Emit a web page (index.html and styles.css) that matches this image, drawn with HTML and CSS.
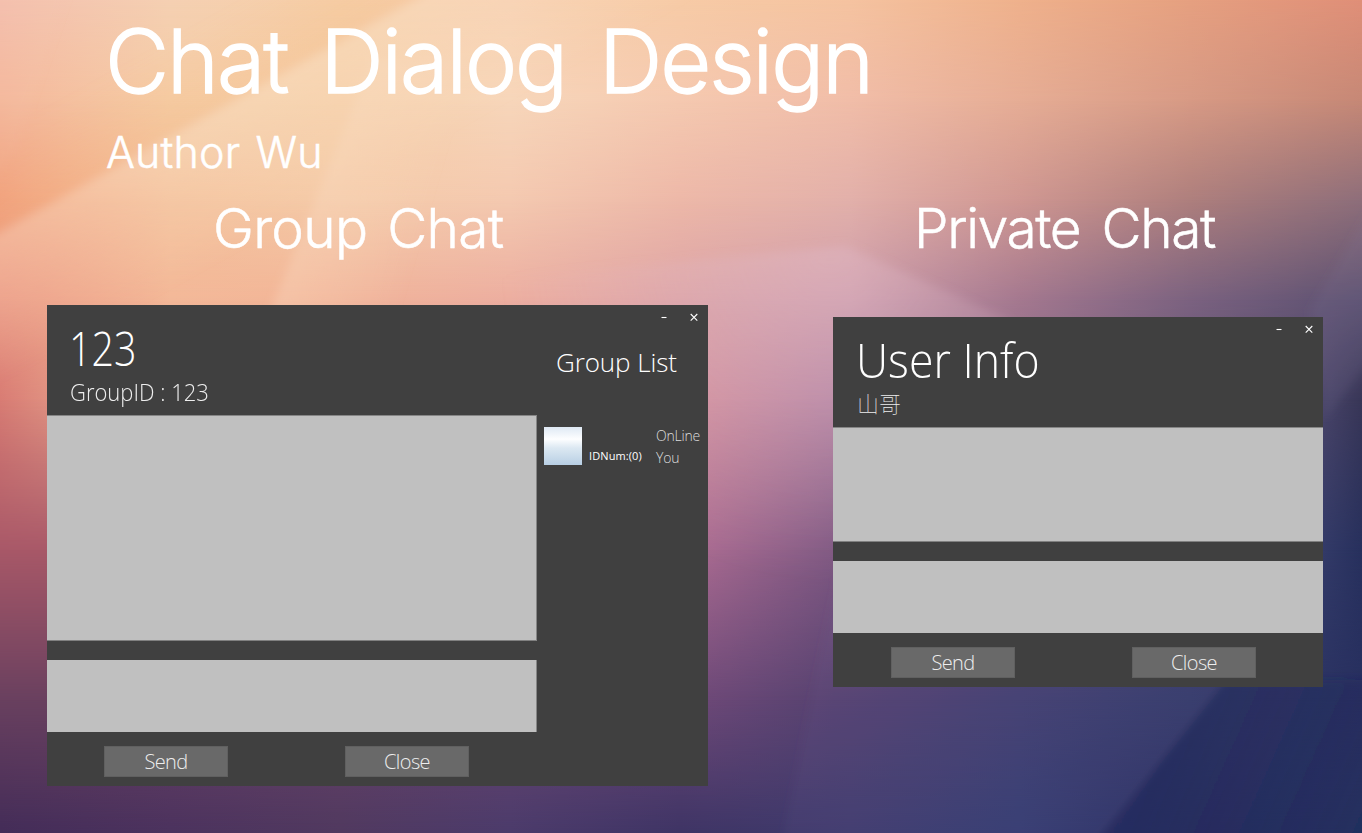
FILE: index.html
```html
<!DOCTYPE html>
<html lang="en">
<head>
<meta charset="utf-8">
<title>Chat Dialog Design</title>
<link rel="stylesheet" href="styles.css">
</head>
<body>
<div class="backdrop" aria-hidden="true">
  <div class="band band-1"></div>
  <div class="band band-2"></div>
  <div class="band band-3"></div>
  <div class="band band-4"></div>
  <div class="band band-5"></div>
  <div class="band band-6"></div>
  <div class="band band-7"></div>
  <div class="band band-8"></div>
  <svg class="facets" width="1362" height="833" viewBox="0 0 1362 833">
    <defs>
      <filter id="soft" filterUnits="userSpaceOnUse" x="-60" y="-60" width="1482" height="953"><feGaussianBlur stdDeviation="5"/></filter>
      <linearGradient id="g1" gradientUnits="userSpaceOnUse" x1="200" y1="118" x2="265" y2="235"><stop offset="0" stop-color="#f9e2c8" stop-opacity=".38"/><stop offset="1" stop-color="#f9e2c8" stop-opacity="0"/></linearGradient>
      <linearGradient id="g1b" gradientUnits="userSpaceOnUse" x1="200" y1="118" x2="160" y2="46"><stop offset="0" stop-color="#f3b57c" stop-opacity=".22"/><stop offset="1" stop-color="#f3b57c" stop-opacity="0"/></linearGradient>
      <linearGradient id="g2" gradientUnits="userSpaceOnUse" x1="310" y1="170" x2="430" y2="205"><stop offset="0" stop-color="#fadfc8" stop-opacity=".32"/><stop offset="1" stop-color="#fadfc8" stop-opacity="0"/></linearGradient>
      <radialGradient id="g3" gradientUnits="userSpaceOnUse" cx="830" cy="250" r="330"><stop offset="0" stop-color="#e2bcca" stop-opacity=".38"/><stop offset=".35" stop-color="#e2bcca" stop-opacity=".25"/><stop offset="1" stop-color="#e6bcca" stop-opacity="0"/></radialGradient>
      <linearGradient id="g4" gradientUnits="userSpaceOnUse" x1="1160" y1="760" x2="1360" y2="850"><stop offset="0" stop-color="#22285a" stop-opacity=".6"/><stop offset="1" stop-color="#22285a" stop-opacity=".1"/></linearGradient>
    </defs>
    <g filter="url(#soft)">
      <path fill="url(#g1b)" d="M-40 255 460 -25-40 -25Z"/>
      <path fill="url(#g1)" d="M-40 255 460 -25 700 -25 500 400-40 400Z"/>
      <path fill="url(#g2)" d="M372 60 265 325 600 325 600 60Z"/>
      <path fill="url(#g3)" d="M380 290 845 246 1010 320 1010 600 380 600Z"/>
      <path fill="url(#g4)" d="M1225 680 1080 860 1400 860 1400 680Z"/>
      <path fill="#f7c9b6" fill-opacity=".08" d="M-40 -40H78L14 150-40 220Z"/>
      <path fill="#7a78a8" fill-opacity=".08" d="M840 560 778 860 1080 860 1225 680 1225 560Z"/>
      <path fill="#8b84a8" fill-opacity=".12" d="M1400 160 1310 310 1325 420 1400 320Z"/>
    </g>
  </svg>
</div>
<main class="page">
  <header class="intro">
    <h1 class="title">Chat Dialog Design</h1>
    <p class="author">Author Wu</p>
  </header>
  <div class="boards">
    <section class="board board-group">
      <h2 class="caption caption-group">Group Chat</h2>
      <div class="window window-group">
        <div class="conversation">
          <div class="head">
            <div class="name name-group">123</div>
            <div class="detail">GroupID : 123</div>
          </div>
          <div class="messages"></div>
          <div class="input"></div>
          <div class="actions"><button class="btn">Send</button><button class="btn">Close</button></div>
        </div>
        <aside class="members">
          <h3 class="members-title">Group List</h3>
          <div class="member">
            <span class="avatar"></span>
            <span class="member-id">IDNum:(0)</span>
            <span class="member-status"><span>OnLine</span><span>You</span></span>
          </div>
        </aside>
        <div class="controls">
          <svg width="6" height="10" viewBox="0 0 6 10"><path d="M.5 5.5h5"/></svg>
          <svg width="8" height="10" viewBox="0 0 8 10"><path d="M.7 2 7.3 8.6M7.3 2 .7 8.6"/></svg>
        </div>
      </div>
    </section>
    <section class="board board-private">
      <h2 class="caption caption-private">Private Chat</h2>
      <div class="window window-private">
        <div class="conversation">
          <div class="head">
            <div class="name name-user">User Info</div>
            <div class="detail detail-cjk" lang="zh">山哥</div>
          </div>
          <div class="messages"></div>
          <div class="input"></div>
          <div class="actions"><button class="btn">Send</button><button class="btn">Close</button></div>
        </div>
        <div class="controls">
          <svg width="6" height="10" viewBox="0 0 6 10"><path d="M.5 5.5h5"/></svg>
          <svg width="8" height="10" viewBox="0 0 8 10"><path d="M.7 2 7.3 8.6M7.3 2 .7 8.6"/></svg>
        </div>
      </div>
    </section>
  </div>
</main>
</body>
</html>
```
FILE: styles.css
```css
* { box-sizing: border-box; margin: 0; padding: 0; }
body {
  width: 1362px; height: 833px; overflow: hidden; position: relative;
  font-family: "Open Sans", "Noto Sans CJK SC", sans-serif; font-weight: 300; color: #fff;
}

/* Wallpaper: horizontal gradients that fade into each other from top to bottom */
.backdrop { position: absolute; inset: 0; overflow: hidden; }
.facets { position: absolute; inset: 0; }
.band { position: absolute; inset: 0; }
.band-1 { background: linear-gradient(90deg, #f4bfae, #f5d0b2 170px, #f6cfa8 340px, #f8d0b0 510px, #f7cba6 680px, #f5c3a0 850px, #efb18c 1020px, #e6a080 1190px, #e08f78); }
.band-2 { background: linear-gradient(90deg, #f4b79b, #f5cda6 170px, #f6cfa8 340px, #f7d6ba 510px, #f5c9b0 680px, #f1bda8 850px, #e6ad95 1020px, #d79a85 1190px, #c68876); mask-image: linear-gradient(180deg, transparent, #000 100px); }
.band-3 { background: linear-gradient(90deg, #f1a07e, #f4c09a 170px, #f5cba9 340px, #f4c9b0 510px, #edb8a8 680px, #e2b0aa 850px, #cf9792 1020px, #ae7f7d 1190px, #8e6e7a); mask-image: linear-gradient(180deg, transparent 100px, #000 200px); }
.band-4 { background: linear-gradient(90deg, #ea947f, #f3b898 170px, #f2b597 300px, #ecaea0 510px, #dca3a6 680px, #cd9cab 850px, #a4788f 1020px, #7b6280 1190px, #5b5070); mask-image: linear-gradient(180deg, transparent 200px, #000 300px); }
.band-5 { background: linear-gradient(90deg, #d87c74, #df8f80 47px, #cf8f9e 708px, #b584a2 833px, #494468 1323px, #383657); mask-image: linear-gradient(180deg, transparent 300px, #000 400px); }
.band-6 { background: linear-gradient(90deg, #a85868, #a85868 47px, #a76a90 708px, #7f5882 833px, #333a68 1323px, #27305d); mask-image: linear-gradient(180deg, transparent 400px, #000 550px); }
.band-7 { background: linear-gradient(90deg, #69405f, #69405f 47px, #6c4877 708px, #564270 833px, #423f70 1020px, #343b6a 1190px, #283060); mask-image: linear-gradient(180deg, transparent 550px, #000 700px); }
.band-8 { background: linear-gradient(90deg, #432c58, #4b325e 170px, #50395f 340px, #4b3b6b 510px, #3e3465 680px, #3f3b6d 850px, #343c70 1020px, #292f62 1190px, #23305f); mask-image: linear-gradient(180deg, transparent 700px, #000 833px); }

.page { position: relative; }
.intro { padding: 8px 0 0 105px; height: 195px; }
.title, .author, .caption { font-family: Inter, sans-serif; white-space: nowrap; font-weight: 300; -webkit-text-stroke: .5px #fff; }
.title { font-size: 88px; line-height: 106px; letter-spacing: -2px; word-spacing: 10px; -webkit-text-stroke-width: 1.3px; }
.author { font-size: 43px; line-height: 52px; margin: 12px 0 0 1px; word-spacing: 3px; letter-spacing: .15px; }
.caption { font-size: 55px; line-height: 66px; letter-spacing: -.7px; word-spacing: 5px; }
.boards { display: flex; gap: 125px; padding-left: 47px; align-items: flex-start; }
.caption-group { padding-left: 166px; height: 110px; }
.caption-private { padding-left: 81px; height: 122px; letter-spacing: -1.35px; word-spacing: 7px; }

.window { position: relative; display: flex; background: #404040; }
.window-group { width: 661px; height: 481px; }
.window-private { width: 490px; height: 370px; }
.conversation { width: 490px; display: flex; flex-direction: column; }
.head { height: 110px; padding: 14px 0 0 23px; }
.name, .detail { width: max-content; transform-origin: 0 0; }
.name { font-size: 48px; line-height: 58px; white-space: nowrap; }
.name-group { transform: translateX(-1px) scaleX(.82); }
.name-user { transform: scaleX(.93); }
.detail { font-size: 24px; line-height: 30px; white-space: nowrap; color: #eee; transform: scaleX(.916); }
.detail-cjk { font-family: "Noto Sans CJK SC", sans-serif; font-weight: 100; font-size: 22px; line-height: 27px; padding-left: 1px; transform: none; }
.messages { flex: 1; background: #c0c0c0; box-shadow: inset 0 1px #868686, inset 0 -1px #808080; margin-bottom: 19px; }
.window-group .messages, .window-group .input { border-right: 1px solid #868686; }
.input { height: 72px; background: #c0c0c0; }
.actions { height: 54px; display: flex; gap: 117px; padding: 14px 0 0 57px; }
.window-private .actions { padding-left: 58px; }
.btn {
  width: 124px; height: 31px; border: 1px solid #606060; background: #696969; color: #eee;
  font: 300 20px/28px "Open Sans", sans-serif; letter-spacing: -.6px; text-align: center;
}
.members { flex: 1; padding: 38px 0 0 7px; }
.members-title { font-size: 26px; line-height: 38px; font-weight: 300; padding-left: 12px; white-space: nowrap; letter-spacing: -.1px; }
.member { display: flex; margin-top: 46px; white-space: nowrap; }
.avatar { width: 38px; height: 38px; background: linear-gradient(#dfe9f4, #fdfeff 32%, #dce8f2 55%, #b8cfe4); }
.member-id { width: 67px; margin-left: 7px; padding-top: 21px; font-size: 11px; line-height: 16px; font-weight: 400; letter-spacing: .1px; }
.member-status { display: grid; grid-auto-rows: 22px; font-size: 14px; line-height: 18px; color: #ddd; letter-spacing: -.2px; }
.controls { position: absolute; top: 7px; right: 10px; display: flex; gap: 23px; }
.controls path { fill: none; stroke: #fff; stroke-width: 1.1; }
```
